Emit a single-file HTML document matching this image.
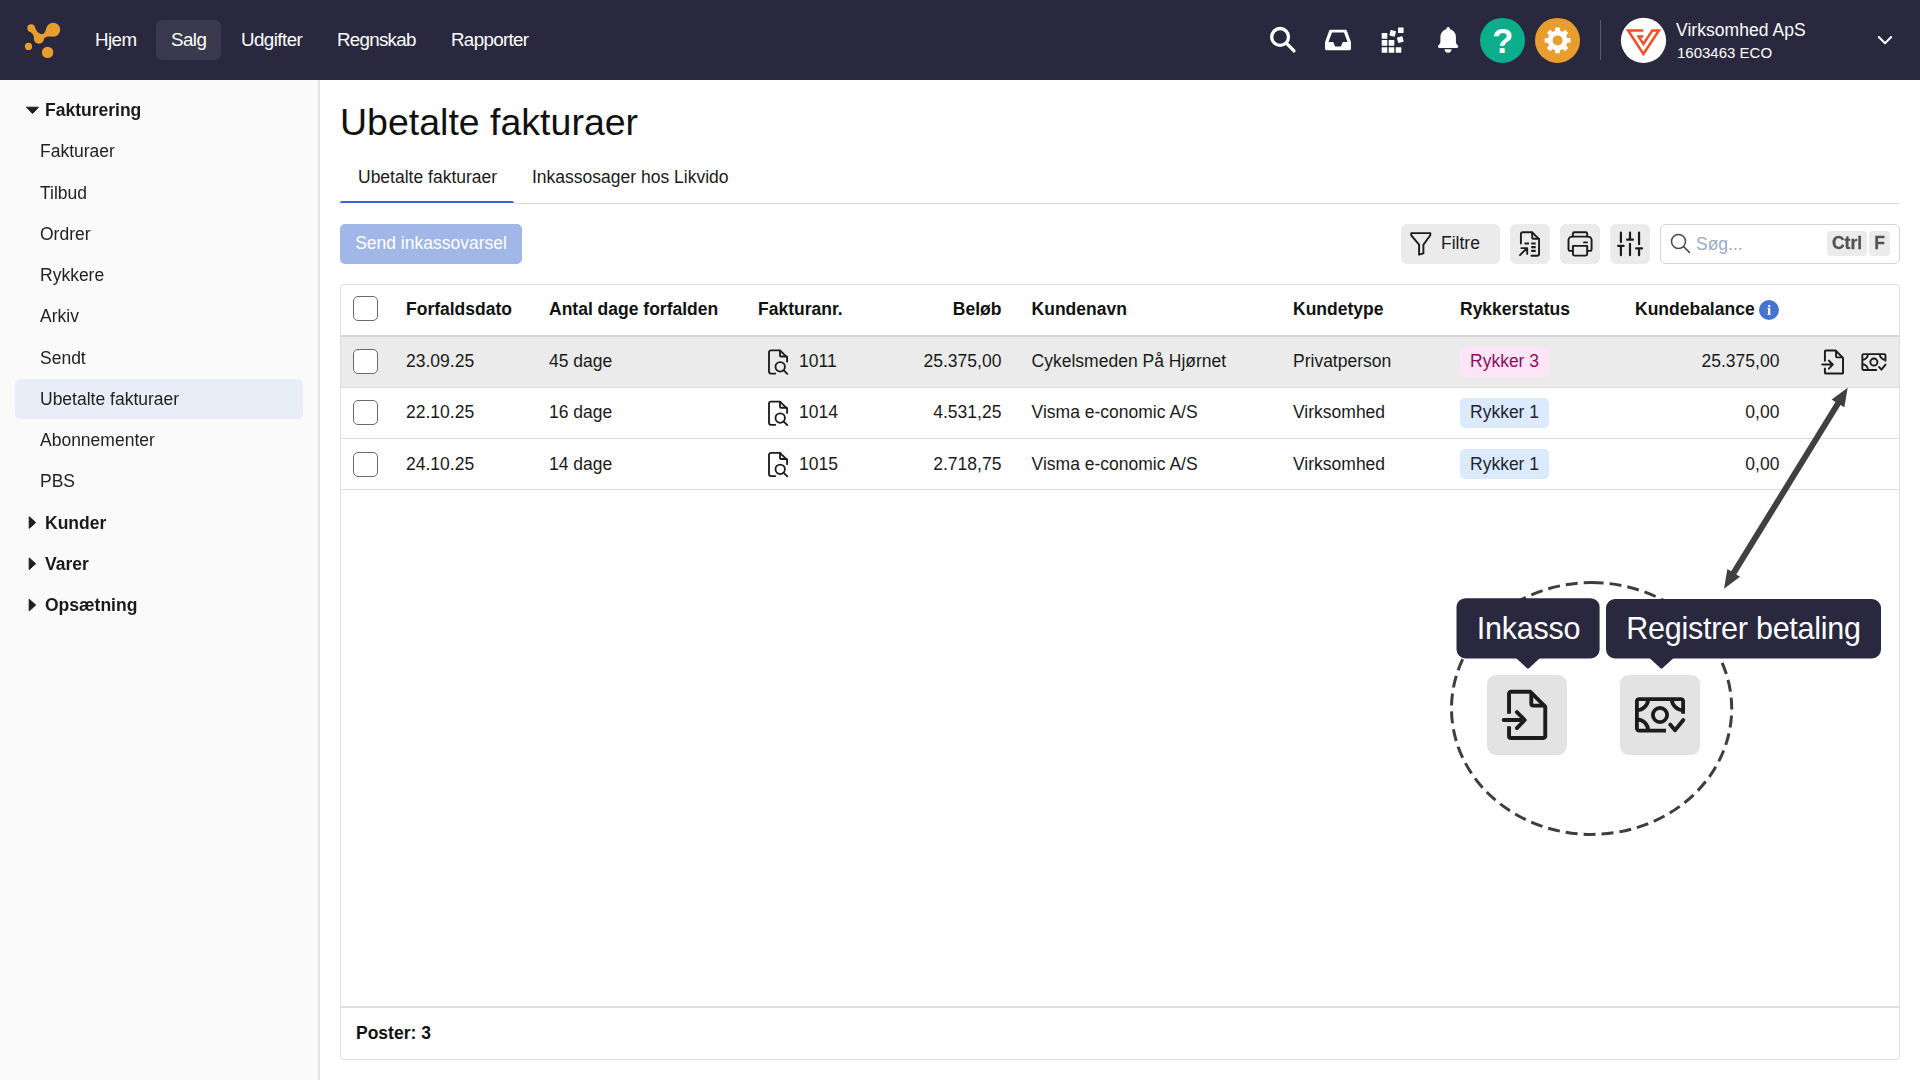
<!DOCTYPE html>
<html lang="da">
<head>
<meta charset="utf-8">
<title>Ubetalte fakturaer</title>
<style>
*{box-sizing:border-box;margin:0;padding:0}
html,body{width:1920px;height:1080px;overflow:hidden;background:#fff}
body{font-family:"Liberation Sans",sans-serif;font-size:17.5px;color:#1a1a1a;position:relative}
.abs{position:absolute}
/* NAVBAR */
#nav{position:absolute;left:0;top:0;width:1920px;height:80px;background:#2a283e}
#nav .item{position:absolute;top:20px;height:40px;line-height:40px;color:#fff;font-size:18.75px;letter-spacing:-0.55px;padding:0 15px;border-radius:6px;white-space:nowrap}
#nav .item.active{background:#3b394d}
/* SIDEBAR */
#side{position:absolute;left:0;top:80px;width:320px;height:1000px;background:#fafafa;border-right:2px solid #e3e3e3;will-change:transform}
#side .grp{position:absolute;left:45px;font-weight:bold;font-size:17.5px;line-height:41px;height:41px;white-space:nowrap}
#side .sub{position:absolute;left:40px;font-size:17.5px;line-height:41px;height:41px;white-space:nowrap;color:#222}
#side .act{position:absolute;left:15px;width:288px;height:40px;background:#e9edf8;border-radius:5px}
/* MAIN */
h1{position:absolute;left:340px;top:99px;font-size:37.5px;font-weight:normal;line-height:46px;color:#111;white-space:nowrap}
.tab{position:absolute;top:157px;height:40px;line-height:40px;font-size:17.5px;white-space:nowrap;color:#1a1a1a}
#tabline{position:absolute;left:514px;top:203px;width:1386px;height:1px;background:#dcdcdc}
#tabact{position:absolute;left:340px;top:201px;width:174px;height:2.3px;background:#3567ce;border-radius:2px 2px 0 0}
#btn{position:absolute;left:340px;top:224px;width:182px;height:40px;border-radius:5px;background:#a1b7e8;color:#fff;font-size:17.5px;line-height:39px;text-align:center;white-space:nowrap}
.tb{position:absolute;top:224px;height:40px;background:#ebebeb;border-radius:6px}
#search{position:absolute;left:1660px;top:224px;width:240px;height:40px;border:1px solid #d5d5d5;border-radius:6px;background:#fff}
.kbd{position:absolute;top:231px;height:25px;background:#ebebeb;border-radius:4px;font-weight:bold;font-size:17.5px;line-height:25px;color:#535353;-webkit-text-stroke:0.3px #535353;text-align:center;will-change:transform}
/* TABLE */
#table{position:absolute;left:340px;top:284px;width:1560px;height:776px;border:1px solid #dedede;border-radius:4px;background:#fff}
.row{position:absolute;left:341px;width:1558px}
.hl{position:absolute;left:341px;width:1558px;height:1px;background:#dcdcdc}
.cell{position:absolute;font-size:17.5px;line-height:24px;height:24px;white-space:nowrap;color:#1a1a1a}
.th{font-weight:bold;color:#111}
.r{text-align:right}
.cb{position:absolute;left:353px;width:25px;height:25px;border:1px solid #6a6a6a;border-radius:5px;background:#fff}
.badge{position:absolute;left:1460px;height:30px;border-radius:5px;font-size:17.5px;padding:0 10px;white-space:nowrap}
.badge span{position:relative;display:block;height:24px;line-height:24px}
.b1{background:#dceafd;color:#1d2434}
.b3{background:#fde4f6;color:#8b0f61}
svg{position:absolute;overflow:visible}
/* CALLOUT */
.tip{position:absolute;color:#fff;background:#2a283e;font-size:30.5px;letter-spacing:-0.25px;line-height:40px;height:40px;text-align:center;white-space:nowrap}
.bigbtn{position:absolute;width:80px;height:80px;border-radius:8px;background:#e3e3e3}
</style>
</head>
<body>
<!-- NAVBAR -->
<div id="nav">
  <svg id="logo" style="left:0;top:0" width="80" height="80" viewBox="0 0 80 80">
    <g fill="#e89e2e">
      <circle cx="31.2" cy="28.1" r="3.9"/>
      <circle cx="53.2" cy="29.8" r="7"/>
      <circle cx="38.9" cy="38.8" r="5"/>
      <circle cx="28.5" cy="46.4" r="3.6"/>
      <circle cx="47.6" cy="52.4" r="5.7"/>
      <path d="M27.6 29.6 L34.6 26.3 C36 31 38.5 33.8 41.5 34.3 C44 34.3 45.3 32 46.4 28 L51.5 36.6 C48 36.2 45.5 36.6 44.2 38.6 L34.2 40.6 C35 36.5 32.5 33.3 27.6 29.6 Z"/>
    </g>
  </svg>

  <!-- nav icons -->
  <svg style="left:0;top:0" width="1920" height="80" viewBox="0 0 1920 80">
    <!-- search -->
    <g fill="none" stroke="#fff" stroke-width="3.3" stroke-linecap="round">
      <circle cx="1280.1" cy="36.9" r="8.4"/>
      <line x1="1286.6" y1="43.4" x2="1294" y2="50.9"/>
    </g>
    <!-- inbox -->
    <path fill="#fff" fill-rule="evenodd" d="M1330.6 29.7 h14.8 a1.6 1.6 0 0 1 1.5 1 l4.1 11.6 v6.1 a1.9 1.9 0 0 1 -1.9 1.9 h-22.2 a1.9 1.9 0 0 1 -1.9 -1.9 v-6.1 l4.1 -11.6 a1.6 1.6 0 0 1 1.5 -1 z M1332 32.6 l-3.5 9.4 h4.7 l1.9 4.6 h5.8 l1.9 -4.6 h4.7 l-3.5 -9.4 z"/>
    <!-- grid -->
    <g fill="#fff">
      <rect x="1381.7" y="47.2" width="5.6" height="5.6" rx=".4"/>
      <rect x="1388.7" y="47.2" width="5.6" height="5.6" rx=".4"/>
      <rect x="1395.7" y="47.2" width="5.6" height="5.6" rx=".4"/>
      <rect x="1381.7" y="40.1" width="5.6" height="5.6" rx=".4"/>
      <rect x="1388.7" y="40.1" width="5.6" height="5.6" rx=".4"/>
      <rect x="1381.7" y="33.1" width="5.6" height="5.6" rx=".4"/>
      <rect x="-2.8" y="-2.8" width="5.6" height="5.6" rx=".4" transform="translate(1392.7 33.3) rotate(15)"/>
      <rect x="-2.8" y="-2.8" width="5.6" height="5.6" rx=".4" transform="translate(1400.3 39.6) rotate(-15)"/>
      <rect x="-2.8" y="-2.8" width="5.6" height="5.6" rx=".4" transform="translate(1400.8 30.2)"/>
    </g>
    <!-- bell -->
    <g fill="#fff">
      <circle cx="1448.100" cy="28.900" r="1.800"/>
      <path d="M1440.400 36.800 A7.750 7.750 0 0 1 1455.900 36.800 V41.500 C1455.900 43.300 1456.600 44.300 1457.800 45.300 C1458.500 45.900 1458.400 47.900 1457 47.900 H1439.200 C1437.800 47.900 1437.700 45.900 1438.400 45.300 C1439.600 44.300 1440.400 43.300 1440.400 41.500 Z"/>
      <path d="M1444.600 49.200 H1451.500 A3.450 3.450 0 0 1 1444.600 49.200 Z"/>
    </g>
    <!-- help -->
    <circle cx="1502.500" cy="40.400" r="22.500" fill="#0aae8a"/>
    <text x="1502.900" y="52.800" text-anchor="middle" font-family="Liberation Sans, sans-serif" font-weight="bold" font-size="34.500" fill="#fff">?</text>
    <!-- gear -->
    <circle cx="1557.500" cy="40.400" r="22.500" fill="#e89e2e"/>
    <g transform="translate(1557.600 40.400)" fill="#fff">
      <g id="teeth">
        <rect x="-2.400" y="-12.900" width="4.800" height="25.800" rx=".8"/>
        <rect x="-2.400" y="-12.900" width="4.800" height="25.800" rx=".8" transform="rotate(45)"/>
        <rect x="-2.400" y="-12.900" width="4.800" height="25.800" rx=".8" transform="rotate(90)"/>
        <rect x="-2.400" y="-12.900" width="4.800" height="25.800" rx=".8" transform="rotate(135)"/>
      </g>
      <circle r="10"/>
      <circle r="5" fill="#e89e2e"/>
    </g>
    <!-- separator -->
    <rect x="1600" y="20" width="1" height="40" fill="#5b596c"/>
    <!-- company avatar -->
    <circle cx="1643.500" cy="40.400" r="22.600" fill="#fff"/>
    <path fill="none" stroke="#f04e23" stroke-width="2.500" stroke-miterlimit="10" d="M1643.330 36.560 L1638.600 36.560 L1643.440 44 L1652.330 30.390 L1658.900 30.390 L1643.440 53.900 L1628.060 30.390 L1643.330 30.390"/>
    <!-- chevron -->
    <path fill="none" stroke="#fff" stroke-width="2" stroke-linecap="round" stroke-linejoin="round" d="M1878.800 37 L1885 43.200 L1891.200 37"/>
  </svg>
  <div class="abs" style="left:1676px;top:19px;color:#fff;font-size:17.5px;line-height:22px;white-space:nowrap;letter-spacing:0.05px">Virksomhed ApS</div>
  <div class="abs" style="left:1677px;top:42.6px;color:#fff;font-size:15px;line-height:20px;white-space:nowrap">1603463 ECO</div>
  <div class="item" style="left:80px">Hjem</div>
  <div class="item active" style="left:156px;width:65px;padding:0 0 0 15px">Salg</div>
  <div class="item" style="left:226px">Udgifter</div>
  <div class="item" style="left:322px;letter-spacing:-0.72px">Regnskab</div>
  <div class="item" style="left:436px;letter-spacing:-0.67px">Rapporter</div>
</div>

<!-- SIDEBAR -->
<div id="side">
  <div class="act" style="top:299px"></div>
  <div class="grp" style="top:10.00px">Fakturering</div>
  <div class="sub" style="top:51.25px">Fakturaer</div>
  <div class="sub" style="top:92.50px">Tilbud</div>
  <div class="sub" style="top:133.75px">Ordrer</div>
  <div class="sub" style="top:175.00px">Rykkere</div>
  <div class="sub" style="top:216.25px">Arkiv</div>
  <div class="sub" style="top:257.50px">Sendt</div>
  <div class="sub" style="top:298.75px">Ubetalte fakturaer</div>
  <div class="sub" style="top:340.00px">Abonnementer</div>
  <div class="sub" style="top:381.25px">PBS</div>
  <div class="grp" style="top:422.50px">Kunder</div>
  <div class="grp" style="top:463.75px">Varer</div>
  <div class="grp" style="top:505.00px">Opsætning</div>
</div>

<!-- MAIN -->
<h1>Ubetalte fakturaer</h1>
<div class="tab" style="left:358px">Ubetalte fakturaer</div>
<div class="tab" style="left:532px">Inkassosager hos Likvido</div>
<div id="tabline"></div>
<div id="tabact"></div>
<div id="btn">Send inkassovarsel</div>

<div class="tb" style="left:1401px;width:99px"></div>
<div class="cell" style="left:1441px;top:231px">Filtre</div>
<div class="tb" style="left:1510px;width:40px"></div>
<div class="tb" style="left:1560px;width:40px"></div>
<div class="tb" style="left:1610px;width:40px"></div>
<div id="search"></div>
<div class="cell" style="left:1696px;top:232px;color:#9cabc9">Søg...</div>
<div class="kbd" style="left:1827px;width:40px">Ctrl</div>
<div class="kbd" style="left:1869px;width:21px">F</div>

<!-- TABLE -->
<div id="table"></div>
<div class="row" style="top:337px;height:50px;background:#ebebeb"></div>
<div class="hl" style="top:335px;height:2px;background:#d6d6d6"></div>
<div class="hl" style="top:387px"></div>
<div class="hl" style="top:438px"></div>
<div class="hl" style="top:489px"></div>
<div class="hl" style="top:1006px;height:2px;background:#dedede"></div>

<div class="cb" style="top:296px"></div>
<div class="cb" style="top:349px"></div>
<div class="cb" style="top:400px"></div>
<div class="cb" style="top:452px"></div>

<div class="cell th" style="left:406px;top:297px">Forfaldsdato</div>
<div class="cell th" style="left:549px;top:297px">Antal dage forfalden</div>
<div class="cell th" style="left:758px;top:297px">Fakturanr.</div>
<div class="cell th r" style="left:901.4px;width:100px;top:297px">Beløb</div>
<div class="cell th" style="left:1031.6px;top:297px">Kundenavn</div>
<div class="cell th" style="left:1293px;top:297px">Kundetype</div>
<div class="cell th" style="left:1460px;top:297px">Rykkerstatus</div>
<div class="cell th" style="left:1635px;top:297px">Kundebalance</div>

<div class="cell" style="left:406px;top:349px">23.09.25</div>
<div class="cell" style="left:549px;top:349px">45 dage</div>
<div class="cell" style="left:799px;top:349px">1011</div>
<div class="cell r" style="left:851.4px;width:150px;top:349px">25.375,00</div>
<div class="cell" style="left:1031.6px;top:349px">Cykelsmeden På Hjørnet</div>
<div class="cell" style="left:1293px;top:349px">Privatperson</div>
<div class="badge b3" style="top:347px"><span style="top:2px">Rykker 3</span></div>
<div class="cell r" style="left:1629.4px;width:150px;top:349px">25.375,00</div>

<div class="cell" style="left:406px;top:400px">22.10.25</div>
<div class="cell" style="left:549px;top:400px">16 dage</div>
<div class="cell" style="left:799px;top:400px">1014</div>
<div class="cell r" style="left:851.4px;width:150px;top:400px">4.531,25</div>
<div class="cell" style="left:1031.6px;top:400px">Visma e-conomic A/S</div>
<div class="cell" style="left:1293px;top:400px">Virksomhed</div>
<div class="badge b1" style="top:398px"><span style="top:2px">Rykker 1</span></div>
<div class="cell r" style="left:1629.4px;width:150px;top:400px">0,00</div>

<div class="cell" style="left:406px;top:452px">24.10.25</div>
<div class="cell" style="left:549px;top:452px">14 dage</div>
<div class="cell" style="left:799px;top:452px">1015</div>
<div class="cell r" style="left:851.4px;width:150px;top:452px">2.718,75</div>
<div class="cell" style="left:1031.6px;top:452px">Visma e-conomic A/S</div>
<div class="cell" style="left:1293px;top:452px">Virksomhed</div>
<div class="badge b1" style="top:449px"><span style="top:3px">Rykker 1</span></div>
<div class="cell r" style="left:1629.4px;width:150px;top:452px">0,00</div>

<div class="cell th" style="left:356px;top:1021px">Poster: 3</div>


<!-- ICONS -->
<svg width="0" height="0" style="left:0;top:0">
  <defs>
    <g id="i-doc-search" fill="none" stroke="#1c1c1c" stroke-width="1.850" stroke-linecap="round" stroke-linejoin="round">
      <path d="M7.300 24.300 H3 a2 2 0 0 1 -2 -2 V3.100 a2 2 0 0 1 2 -2 H12 L19.100 8.200 V12.400"/>
      <path d="M12 1.300 V6.200 a1 1 0 0 0 1 1 H18.800"/>
      <circle cx="12.200" cy="17.600" r="4.700"/>
      <path d="M15.700 21.100 L19.300 24.600"/>
    </g>
  </defs>
</svg>
<svg style="left:0;top:0" width="1920" height="1080" viewBox="0 0 1920 1080">
  <!-- sidebar carets -->
  <g fill="#1e1e1e" stroke="#1e1e1e" stroke-width="1" stroke-linejoin="round">
    <path d="M26.500 107.200 H38.500 L32.500 113.600 Z"/>
    <path d="M29.200 516.700 L35.700 522.500 L29.200 528.400 Z"/>
    <path d="M29.200 557.900 L35.700 563.700 L29.200 569.600 Z"/>
    <path d="M29.200 599.200 L35.700 605 L29.200 610.900 Z"/>
  </g>
  <!-- filter funnel -->
  <path fill="none" stroke="#1c1c1c" stroke-width="1.900" stroke-linejoin="round" d="M1411.250 233.100 H1430.300 V235.300 L1423.400 244.700 V253.400 L1419.100 254.700 V244.700 L1411.250 235.300 Z"/>
  <!-- export -->
  <g fill="none" stroke="#1c1c1c" stroke-width="1.900" stroke-linecap="round" stroke-linejoin="round">
    <path d="M1520.900 243.500 V234.250 a2 2 0 0 1 2 -2 H1532 L1539.060 239.100 V253.800 a2 2 0 0 1 -2 2 H1531.400"/>
    <path d="M1532.200 232.500 V237.750 a1 1 0 0 0 1 1 H1538.800"/>
    <path d="M1520 255.200 L1527 248.200 M1521.300 248.100 H1527.200 V253.900"/>
  </g>
  <g fill="none" stroke="#1c1c1c" stroke-width="2.200">
    <path d="M1524.500 243.500 H1529 M1531.200 243.500 H1535.700 M1531.200 247.200 H1535.700 M1531.200 250.900 H1535.700"/>
  </g>
  <!-- printer -->
  <g fill="none" stroke="#1c1c1c" stroke-width="1.900" stroke-linecap="round" stroke-linejoin="round">
    <path d="M1572.900 236.600 V233.700 a1.500 1.500 0 0 1 1.500 -1.500 H1585.700 a1.500 1.500 0 0 1 1.500 1.500 V236.600"/>
    <path d="M1572.900 250.900 H1570.500 a2 2 0 0 1 -2 -2 V240.100 a3.500 3.500 0 0 1 3.500 -3.500 H1588.100 a3.500 3.500 0 0 1 3.500 3.500 V248.900 a2 2 0 0 1 -2 2 H1587.200"/>
    <path d="M1572.900 245.900 H1587.200 V254.100 a1.500 1.500 0 0 1 -1.500 1.500 H1574.400 a1.500 1.500 0 0 1 -1.500 -1.500 Z"/>
    <path d="M1584 242.400 H1587"/>
  </g>
  <!-- sliders -->
  <g fill="none" stroke="#1c1c1c" stroke-width="2.200" stroke-linecap="round">
    <path d="M1620.900 232.600 V242 M1618.200 245.900 H1623.600 M1620.900 245.900 V255.200"/>
    <path d="M1630 232.600 V239.700 M1627.100 239.700 H1632.900 M1630 243.800 V255.200"/>
    <path d="M1639.060 232.600 V244.200 M1636.100 248.400 H1642 M1639.060 248.400 V255.200"/>
  </g>
  <!-- search box icon -->
  <g fill="none" stroke="#4a4a4a" stroke-width="1.500" stroke-linecap="round">
    <circle cx="1678.500" cy="241.500" r="7"/>
    <path d="M1683.600 246.600 L1689.400 252.400"/>
  </g>
  <!-- info -->
  <circle cx="1769" cy="310" r="10" fill="#4673d1"/>
  <text x="1769" y="315.300" text-anchor="middle" font-family="Liberation Serif, serif" font-weight="bold" font-size="15" fill="#fff">i</text>
  <!-- row icons -->
  <use href="#i-doc-search" x="768" y="349.250"/>
  <use href="#i-doc-search" x="768" y="400.500"/>
  <use href="#i-doc-search" x="768" y="451.750"/>
  <g transform="translate(1833.980 362) scale(.5) translate(-1527.150 -714.880)"><use href="#big-ink"/></g>
  <g transform="translate(1873.900 362.050) scale(.5) translate(-1660 -714.870)"><use href="#big-pay"/></g>
</svg>

<!-- CALLOUT -->
<svg id="callout" style="left:0;top:0" width="1920" height="1080" viewBox="0 0 1920 1080">
  <path d="M1591.600 582.600 A140.100 125.900 0 0 1 1591.600 834.400 A140.100 125.900 0 0 1 1591.600 582.600" fill="none" stroke="#3e3e3e" stroke-width="3" stroke-dasharray="12 6"/>
  <g fill="#404040">
    <polygon points="1847.70,387.70 1844.35,407.36 1840.56,405.03 1736.25,574.52 1740.04,576.85 1724.00,588.70 1727.35,569.04 1731.14,571.37 1835.45,401.88 1831.66,399.55"/>
  </g>
  <rect x="1487" y="675" width="80" height="80" rx="9" fill="#e3e3e3"/>
  <rect x="1620" y="675" width="80" height="80" rx="9" fill="#e3e3e3"/>
  <g id="big-ink" fill="none" stroke="#1c1c1c" stroke-width="3.900" stroke-linejoin="round">
    <path d="M1509.040 713.750 V693.600 a1.800 1.800 0 0 1 1.800 -1.800 H1530.400 L1545.250 706.700 V736.160 a1.800 1.800 0 0 1 -1.800 1.800 H1510.840 a1.800 1.800 0 0 1 -1.800 -1.800 V726.250"/>
    <path d="M1531.300 692.500 V703.600 a2 2 0 0 0 2 2 H1544.500"/>
    <path stroke-linecap="round" d="M1503.700 720 H1524.400 M1516.900 712.100 L1524.700 720 L1516.900 728.100"/>
  </g>
  <g id="big-pay" fill="none" stroke="#1c1c1c" stroke-width="3.800" stroke-linejoin="round">
    <path d="M1666 730.700 H1639.200 a2.300 2.300 0 0 1 -2.300 -2.300 V701.340 a2.300 2.300 0 0 1 2.300 -2.300 H1680.800 a2.300 2.300 0 0 1 2.300 2.300 V713.750"/>
    <circle cx="1660" cy="715" r="7.100"/>
    <path d="M1648.100 699.040 A11.200 11.200 0 0 1 1636.900 710.250"/>
    <path d="M1671.800 699.040 A11.300 11.300 0 0 0 1683.100 710.250"/>
    <path d="M1636.900 719.300 A11.300 11.300 0 0 1 1648.100 730.700"/>
    <path stroke-linecap="round" d="M1670.200 724.600 L1675 730.200 L1683.300 720"/>
  </g>
  <g fill="#2a283e">
    <rect x="1456.500" y="598.200" width="143.100" height="60.300" rx="9"/>
    <rect x="1606" y="599" width="275" height="59.500" rx="9"/>
    <path d="M1516 658 H1540 L1529.500 667.700 a2 2 0 0 1 -3 0 Z"/>
    <path d="M1649.500 658 H1673.500 L1663 667.700 a2 2 0 0 1 -3 0 Z"/>
  </g>
</svg>
<div class="tip" style="left:1466px;top:608.4px;width:125px">Inkasso</div>
<div class="tip" style="left:1616px;top:608.4px;width:255px">Registrer betaling</div>
</body>
</html>
